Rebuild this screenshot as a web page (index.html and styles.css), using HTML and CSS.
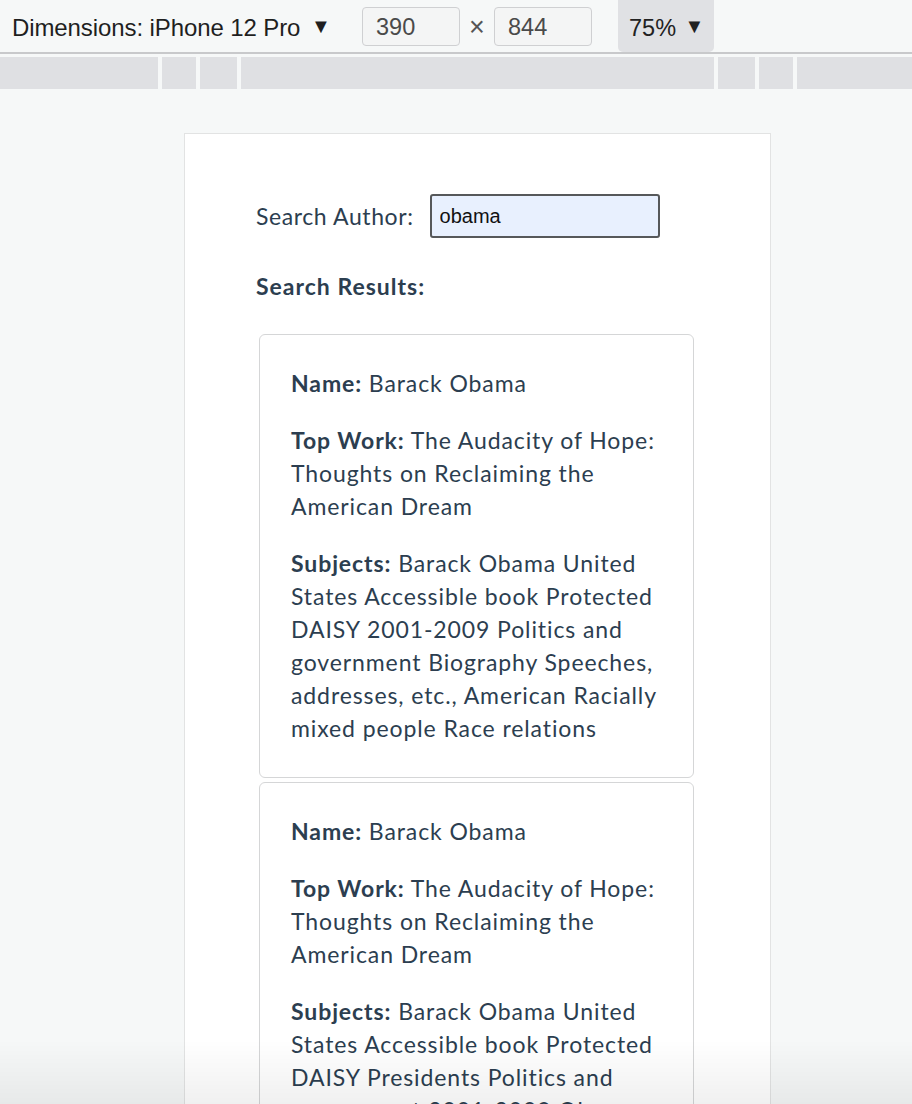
FILE: index.html
```html
<!DOCTYPE html>
<html lang="en">
<head>
<meta charset="utf-8">
<title>Search Author</title>
<link rel="stylesheet" href="styles.css">
</head>
<body>
  <div class="toolbar">
    <span class="device">Dimensions: iPhone 12 Pro <span class="caret">▼</span></span>
    <span class="dim-box">390</span>
    <span class="times">×</span>
    <span class="dim-box">844</span>
    <span class="zoom-btn">75% <span class="caret">▼</span></span>
  </div>
  <div class="ruler">
    <div class="seg w158"></div>
    <div class="seg w34"></div>
    <div class="seg w37"></div>
    <div class="seg w473"></div>
    <div class="seg w37"></div>
    <div class="seg w34"></div>
    <div class="seg fill"></div>
  </div>
  <div class="viewport">
    <div class="frame">
      <div class="search-row">
        <label class="search-label" for="author">Search Author:</label>
        <input id="author" class="search-input" type="text" value="obama">
      </div>
      <h3 class="results-title">Search Results:</h3>
      <div class="card">
        <p><strong>Name:</strong> Barack Obama</p>
        <p><strong>Top Work:</strong> The Audacity of Hope: Thoughts on Reclaiming the American Dream</p>
        <p><strong>Subjects:</strong> Barack Obama United States Accessible book Protected DAISY 2001-2009 Politics and government Biography Speeches, addresses, etc., American Racially mixed people Race relations</p>
      </div>
      <div class="card">
        <p><strong>Name:</strong> Barack Obama</p>
        <p><strong>Top Work:</strong> The Audacity of Hope: Thoughts on Reclaiming the American Dream</p>
        <p><strong>Subjects:</strong> Barack Obama United States Accessible book Protected DAISY Presidents Politics and government 2001-2009 Obama family Biography Speeches, addresses, etc.</p>
      </div>
    </div>
  </div>
  <div class="bottom-shade"></div>
</body>
</html>
```
FILE: styles.css
```css
html, body {
  margin: 0;
  padding: 0;
}
body {
  background: #f6f8f8;
  height: 1104px;
  overflow: hidden;
}

.toolbar {
  height: 52px;
  display: flex;
  align-items: center;
  border-bottom: 2px solid #c8c9cb;
  font-family: "Liberation Sans", Arial, sans-serif;
  font-size: 24px;
  color: #1f1f1f;
  padding-left: 12px;
}
.device {
  width: 350px;
  flex: none;
  white-space: nowrap;
  padding-top: 3px;
  letter-spacing: -0.1px;
}
.caret {
  font-size: 20px;
  position: relative;
  top: -3px;
  margin-left: 4px;
}
.dim-box {
  box-sizing: border-box;
  width: 98px;
  height: 39px;
  border: 1px solid #cfd0d2;
  border-radius: 4px;
  background: #f4f5f5;
  color: #4a4a4a;
  padding-left: 13px;
  line-height: 38px;
  font-size: 23.5px;
}
.times {
  width: 34px;
  text-align: center;
  color: #555;
  font-size: 27px;
  padding-top: 3px;
}
.zoom-btn {
  box-sizing: border-box;
  height: 52px;
  width: 96px;
  margin-left: 26px;
  align-self: flex-start;
  background: #e0e1e4;
  border-radius: 0 0 5px 5px;
  padding-left: 11px;
  line-height: 56px;
  color: #222;
  font-size: 23.5px;
}
.zoom-btn .caret {
  margin-left: 2px;
}

.ruler {
  margin-top: 3px;
  height: 32px;
  display: flex;
  gap: 4px;
}
.seg { background: #dfe0e3; height: 100%; }
.w158 { width: 158px; }
.w34 { width: 34px; }
.w37 { width: 37px; }
.w473 { width: 473px; }
.fill { flex: 1; }

.viewport {
  padding-top: 44px;
  padding-left: 184px;
}
.frame {
  box-sizing: border-box;
  width: 587px;
  height: 1000px;
  background: #ffffff;
  border: 1px solid #e2e3e3;
  border-bottom: none;
  padding-top: 60px;
  font-family: Lato, "Noto Sans", sans-serif;
  font-size: 23px;
  letter-spacing: 0.6px;
  line-height: 33px;
  color: #2c3e50;
}

.search-row {
  display: flex;
  align-items: center;
  gap: 16px;
  margin-left: 71px;
  height: 44px;
}
.search-label {
  white-space: nowrap;
}
.search-input {
  box-sizing: border-box;
  width: 230px;
  height: 44px;
  border: 2px solid #56585a;
  border-radius: 3px;
  background: #e8f0fe;
  font-family: "Liberation Sans", Arial, sans-serif;
  font-size: 20px;
  letter-spacing: 0;
  color: #111;
  padding: 0 8px;
  outline: none;
}

.results-title {
  margin: 32px 0 31px 71px;
  font-size: 23px;
  font-weight: 700;
  letter-spacing: 1px;
  line-height: 33px;
}

.card {
  margin: 0 76px 4px 74px;
  border: 1px solid #d5d6d7;
  border-radius: 6px;
  padding: 32px 31px;
  letter-spacing: 0.9px;
}
.card p {
  margin: 0 0 24px;
}
.card p:last-child {
  margin-bottom: 0;
}
.card strong {
  font-weight: 700;
}

.bottom-shade {
  position: fixed;
  left: 0;
  right: 0;
  bottom: 0;
  height: 64px;
  background: linear-gradient(to bottom, rgba(0,0,0,0), rgba(0,0,0,0.06));
  pointer-events: none;
}
```
